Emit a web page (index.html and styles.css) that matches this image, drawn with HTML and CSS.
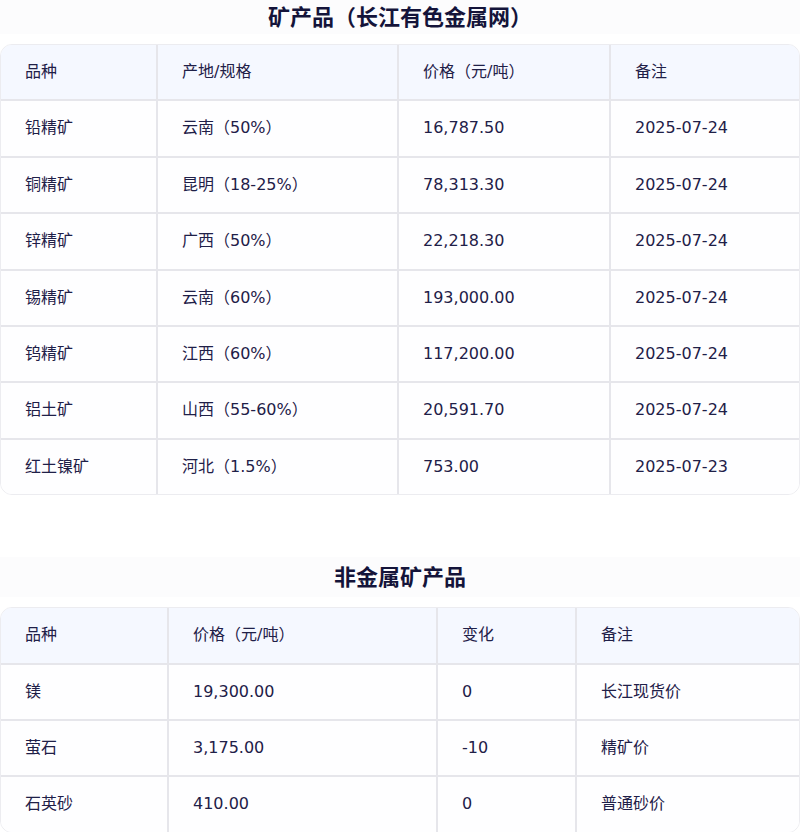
FILE: index.html
```html
<!DOCTYPE html>
<html lang="zh-CN">
<head>
<meta charset="utf-8">
<title>矿产品</title>
<link rel="stylesheet" href="styles.css">
</head>
<body>
<section class="block first">
  <h2 class="title">矿产品（长江有色金属网）</h2>
  <table class="grid">
    <thead>
      <tr><th class="c1a">品种</th><th class="c1b">产地/规格</th><th class="c1c">价格（元/吨）</th><th class="c1d">备注</th></tr>
    </thead>
    <tbody>
      <tr><td>铅精矿</td><td>云南（50%）</td><td>16,787.50</td><td>2025-07-24</td></tr>
      <tr><td>铜精矿</td><td>昆明（18-25%）</td><td>78,313.30</td><td>2025-07-24</td></tr>
      <tr><td>锌精矿</td><td>广西（50%）</td><td>22,218.30</td><td>2025-07-24</td></tr>
      <tr><td>锡精矿</td><td>云南（60%）</td><td>193,000.00</td><td>2025-07-24</td></tr>
      <tr><td>钨精矿</td><td>江西（60%）</td><td>117,200.00</td><td>2025-07-24</td></tr>
      <tr><td>铝土矿</td><td>山西（55-60%）</td><td>20,591.70</td><td>2025-07-24</td></tr>
      <tr><td>红土镍矿</td><td>河北（1.5%）</td><td>753.00</td><td>2025-07-23</td></tr>
    </tbody>
  </table>
</section>
<section class="block second">
  <h2 class="title">非金属矿产品</h2>
  <table class="grid">
    <thead>
      <tr><th class="c2a">品种</th><th class="c2b">价格（元/吨）</th><th class="c2c">变化</th><th class="c2d">备注</th></tr>
    </thead>
    <tbody>
      <tr><td>镁</td><td>19,300.00</td><td>0</td><td>长江现货价</td></tr>
      <tr><td>萤石</td><td>3,175.00</td><td>-10</td><td>精矿价</td></tr>
      <tr><td>石英砂</td><td>410.00</td><td>0</td><td>普通砂价</td></tr>
    </tbody>
  </table>
</section>
</body>
</html>
```
FILE: styles.css
```css
html, body {
  margin: 0;
  padding: 0;
  background: #ffffff;
}
body {
  font-family: "DejaVu Sans", "Noto Sans CJK SC", sans-serif;
  font-size: 16px;
  color: #1f2048;
}
.block {
  display: flex;
  flex-direction: column;
  gap: 10px;
}
.second {
  margin-top: 62px;
}
.title {
  margin: 0;
  box-sizing: border-box;
  height: 40px;
  padding-bottom: 5px;
  display: flex;
  align-items: center;
  justify-content: center;
  background: #fcfcfd;
  font-family: "Noto Sans CJK SC", sans-serif;
  font-size: 22px;
  font-weight: 700;
  color: #14143a;
}
.first .title {
  height: 34px;
  padding-bottom: 4px;
}
.grid {
  width: 100%;
  border-collapse: separate;
  border-spacing: 0;
  border: 1px solid #ececf0;
  border-radius: 12px;
  overflow: hidden;
  table-layout: fixed;
}
.grid th,
.grid td {
  box-sizing: border-box;
  text-align: left;
  font-weight: 400;
  padding: 15px 24px;
  line-height: 24.4px;
  border-bottom: 2px solid #e6e6eb;
  border-right: 2px solid #e6e6eb;
  white-space: nowrap;
}
.grid th:last-child,
.grid td:last-child {
  border-right: none;
}
.grid tbody tr:last-child td {
  border-bottom: none;
}
.grid th {
  background: #f5f8ff;
}
.grid td {
  background: #fefeff;
}
.c1a { width: 157px; }
.c1b { width: 241px; }
.c1c { width: 212px; }
.c1d { width: auto; }
.c2a { width: 168px; }
.c2b { width: 269px; }
.c2c { width: 139px; }
.c2d { width: auto; }
```
